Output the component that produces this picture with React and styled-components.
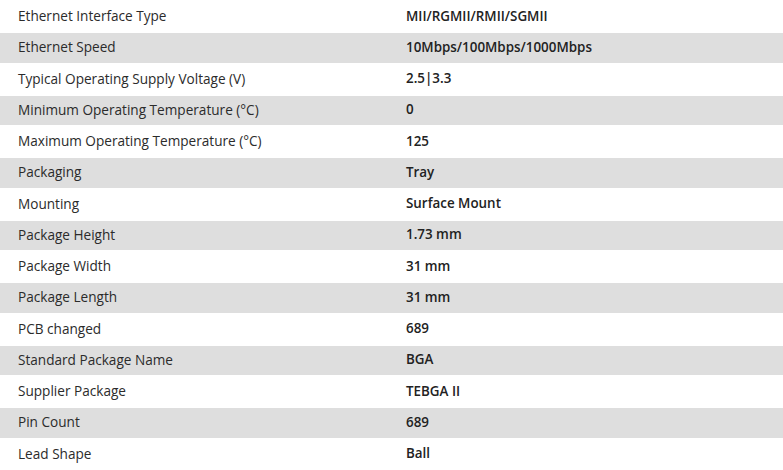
import React from "react";
import styled, { createGlobalStyle } from "styled-components";

const Global = createGlobalStyle`
  html, body { margin: 0; padding: 0; background: #ffffff; }
  body { font-family: "Open Sans", "Noto Sans", Arial, sans-serif; }
`;

const Table = styled.div`
  width: 783px;
  display: flex;
  flex-direction: column;
`;

const Row = styled.div`
  display: grid;
  grid-template-columns: 388px 1fr;
  align-items: center;
  height: 31.25px;
  box-sizing: border-box;
  border-top: 2px solid #ffffff;
  padding-bottom: 2px;
  background: ${(p) => (p.$shaded ? "#dedede" : "#ffffff")};
`;

const Label = styled.div`
  padding-left: 18px;
  font-size: 13.6px;
  font-weight: 400;
  color: #2b2b2b;
  white-space: nowrap;
`;

const Value = styled.div`
  padding-left: 18px;
  font-size: 13.4px;
  font-weight: 600;
  color: #222222;
  white-space: nowrap;
`;

const rows = [
  ["Ethernet Interface Type", "MII/RGMII/RMII/SGMII"],
  ["Ethernet Speed", "10Mbps/100Mbps/1000Mbps"],
  ["Typical Operating Supply Voltage (V)", "2.5|3.3"],
  ["Minimum Operating Temperature (°C)", "0"],
  ["Maximum Operating Temperature (°C)", "125"],
  ["Packaging", "Tray"],
  ["Mounting", "Surface Mount"],
  ["Package Height", "1.73 mm"],
  ["Package Width", "31 mm"],
  ["Package Length", "31 mm"],
  ["PCB changed", "689"],
  ["Standard Package Name", "BGA"],
  ["Supplier Package", "TEBGA II"],
  ["Pin Count", "689"],
  ["Lead Shape", "Ball"],
];

export default function App() {
  return (
    <>
      <Global />
      <Table>
        {rows.map(([k, v], i) => (
          <Row key={k} $shaded={i % 2 === 1}>
            <Label>{k}</Label>
            <Value>{v}</Value>
          </Row>
        ))}
      </Table>
    </>
  );
}
